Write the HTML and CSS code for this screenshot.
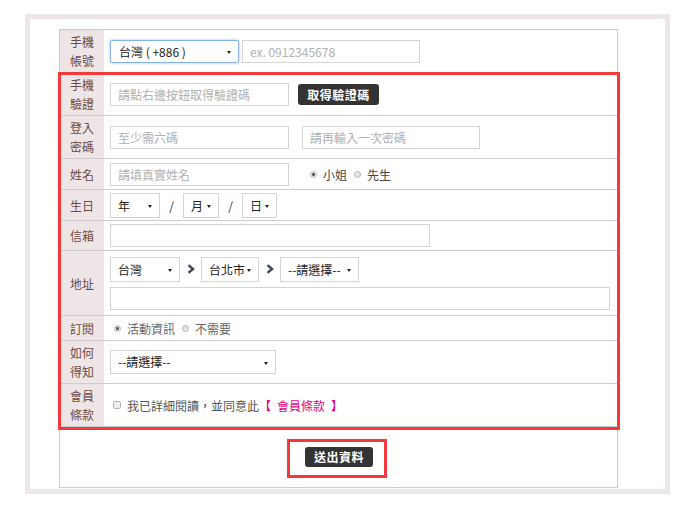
FILE: index.html
```html
<!DOCTYPE html>
<html>
<head>
  <meta charset="utf-8">
  <link rel="stylesheet" href="styles.css">
</head>
<body>
  <div class="frame">
    <div class="form-table">

      <div class="row">
        <div class="label">手機<br>帳號</div>
        <div class="field">
          <div class="select select-focus w-phone">台灣 ( +886 )</div>
          <input class="text w-tel" type="text" placeholder="ex. 0912345678">
        </div>
      </div>

      <div class="row">
        <div class="label">手機<br>驗證</div>
        <div class="field">
          <input class="text w-half" type="text" placeholder="請點右邊按鈕取得驗證碼">
          <button class="btn-dark btn-code">取得驗證碼</button>
        </div>
      </div>

      <div class="row">
        <div class="label">登入<br>密碼</div>
        <div class="field">
          <input class="text w-half" type="password" placeholder="至少需六碼">
          <input class="text w-tel pw-again" type="password" placeholder="請再輸入一次密碼">
        </div>
      </div>

      <div class="row row-short">
        <div class="label">姓名</div>
        <div class="field">
          <input class="text w-half" type="text" placeholder="請填真實姓名">
          <div class="choices gender">
            <span class="radio on"></span><span class="choice-text dark">小姐</span>
            <span class="radio"></span><span class="choice-text dark">先生</span>
          </div>
        </div>
      </div>

      <div class="row row-short">
        <div class="label">生日</div>
        <div class="field">
          <div class="select w-year">年</div>
          <span class="slash">/</span>
          <div class="select w-month">月</div>
          <span class="slash">/</span>
          <div class="select w-day">日</div>
        </div>
      </div>

      <div class="row row-mail">
        <div class="label">信箱</div>
        <div class="field">
          <input class="text w-mail" type="text">
        </div>
      </div>

      <div class="row row-address">
        <div class="label">地址</div>
        <div class="field field-stack">
          <div class="address-line">
            <div class="select w-country">台灣</div>
            <span class="arrow">
              <svg width="8" height="10" viewBox="0 0 8 10"><polyline points="1.5,1.2 6,5 1.5,8.8" fill="none" stroke="#3b4656" stroke-width="2.4"/></svg>
            </span>
            <div class="select w-city">台北市</div>
            <span class="arrow">
              <svg width="8" height="10" viewBox="0 0 8 10"><polyline points="1.5,1.2 6,5 1.5,8.8" fill="none" stroke="#3b4656" stroke-width="2.4"/></svg>
            </span>
            <div class="select w-area">--請選擇--</div>
          </div>
          <input class="text w-street" type="text">
        </div>
      </div>

      <div class="row row-tiny">
        <div class="label">訂閱</div>
        <div class="field">
          <div class="choices subscribe">
            <span class="radio on"></span><span class="choice-text">活動資訊</span>
            <span class="radio"></span><span class="choice-text">不需要</span>
          </div>
        </div>
      </div>

      <div class="row">
        <div class="label">如何<br>得知</div>
        <div class="field">
          <div class="select w-source">--請選擇--</div>
        </div>
      </div>

      <div class="row">
        <div class="label">會員<br>條款</div>
        <div class="field">
          <span class="checkbox"></span>
          <span class="agree">我已詳細閱讀，並同意此<span class="terms">【<span class="terms-name">會員條款</span>】</span></span>
        </div>
      </div>

      <div class="submit-row">
        <span class="mark-submit">
          <button class="btn-dark btn-submit">送出資料</button>
        </span>
      </div>

      <!-- red highlight over the required block -->
      <div class="mark-box"></div>
    </div>
  </div>
</body>
</html>
```

FILE: styles.css
```css
* {
  box-sizing: border-box;
}

body {
  margin: 0;
  font-family: "Noto Sans CJK TC", "Noto Sans", sans-serif;
  font-size: 12px;
  color: #333;
  background: #fff;
}

.frame {
  margin: 14px 0 0 25px;
  width: 645px;
  height: 480px;
  border: 5px solid #ede6e7;
  padding: 10px 0 0 29px;
}

.form-table {
  position: relative;
  width: 559px;
  border: 1px solid #ccc;
}

.row {
  display: flex;
  height: 43px;
  border-bottom: 1px solid #ccc;
}

.row-short {
  height: 31px;
}

.row-mail {
  height: 30px;
}

.row-address {
  height: 65px;
}

.row-tiny {
  height: 25px;
}

.label {
  width: 44px;
  flex: none;
  display: flex;
  align-items: center;
  justify-content: center;
  text-align: center;
  background: #eee6e6;
  color: #6d4a45;
  line-height: 19px;
}

.field {
  flex: 1;
  display: flex;
  align-items: center;
  padding-left: 6px;
}

.field-stack {
  flex-direction: column;
  align-items: flex-start;
  justify-content: center;
  gap: 5px;
}

.address-line {
  display: flex;
  align-items: center;
}

/* inputs */
.text {
  height: 23px;
  border: 1px solid #d4d4d4;
  padding: 0 7px;
  font: inherit;
  color: #333;
  background: #fff;
  outline: none;
}

.text::placeholder {
  color: #b0b0b0;
}

.w-half { width: 179px; }
.w-tel { width: 178px; margin-left: 3px; }
.pw-again { margin-left: 13px; }
.w-mail { width: 320px; height: 23px; }
.w-street { width: 500px; }

/* fake selects */
.select {
  position: relative;
  height: 25px;
  border: 1px solid #d4d4d4;
  padding-left: 7px;
  line-height: 23px;
  color: #222;
  background: #fff;
  white-space: nowrap;
}

.select::after {
  content: '';
  position: absolute;
  right: 7px;
  top: 11px;
  border-left: 2px solid transparent;
  border-right: 2px solid transparent;
  border-top: 3px solid #222;
}

.select-focus {
  height: 23px;
  line-height: 21px;
  border-color: #86b2e6;
  border-radius: 2px;
  box-shadow: 0 0 3px rgba(102, 153, 230, 0.6);
  padding-left: 8px;
}

.select-focus::after {
  top: 10px;
}

.w-phone { width: 129px; }
.w-year { width: 50px; }
.w-month { width: 36px; }
.w-day { width: 35px; }
.w-country { width: 70px; }
.w-city { width: 58px; }
.w-area { width: 79px; }
.w-source { width: 166px; height: 24px; line-height: 22px; }

.slash {
  width: 23px;
  text-align: center;
  color: #333;
}

.arrow {
  width: 21px;
  display: flex;
  justify-content: center;
}

/* radios and checkbox */
.choices {
  display: flex;
  align-items: center;
}

.gender {
  margin-left: 21px;
}

.subscribe {
  margin-left: 4px;
}

.radio {
  width: 7px;
  height: 7px;
  border-radius: 50%;
  border: 1px solid #b5b5b5;
  background: #e4e4e4;
  margin-right: 6px;
}

.radio.on {
  background: radial-gradient(circle, #555 0, #555 1.2px, #e8e8e8 1.8px);
}

.choice-text {
  margin-right: 7px;
  color: #666;
}

.choice-text.dark {
  color: #444;
}

.checkbox {
  width: 8px;
  height: 8px;
  margin-left: 3px;
  margin-right: 6px;
  border: 1px solid #b5b5b5;
  border-radius: 2px;
  background: #eee;
}

.agree {
  color: #555;
}

.terms {
  color: #e4007f;
}

.terms-name {
  padding: 0 6px;
}

/* buttons */
.btn-dark {
  border: none;
  border-radius: 3px;
  background: #333;
  color: #fff;
  font-family: inherit;
  font-size: 12px;
  font-weight: bold;
  letter-spacing: 0.5px;
  padding: 0;
  cursor: pointer;
}

.btn-code {
  width: 81px;
  height: 21px;
  margin-left: 9px;
}

.submit-row {
  height: 60px;
  display: flex;
  justify-content: center;
  align-items: flex-start;
  padding-top: 12px;
}

.mark-submit {
  display: inline-block;
  border: 3px solid #f23a3c;
  padding: 5px 11px 8px 15px;
  margin-left: -3px;
  line-height: 0;
}

.btn-submit {
  width: 68px;
  height: 20px;
  line-height: 20px;
}

.mark-box {
  position: absolute;
  left: -2px;
  top: 42px;
  width: 562px;
  height: 358px;
  border: 3px solid #f23a3c;
  pointer-events: none;
}
```
